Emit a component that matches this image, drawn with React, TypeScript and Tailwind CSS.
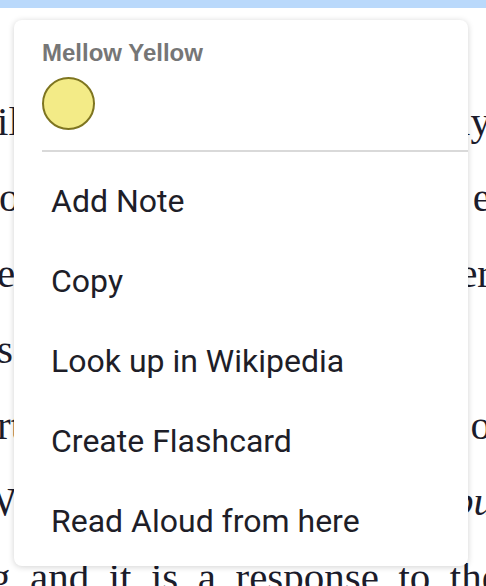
import React from "react";

const menuItems = [
  "Add Note",
  "Copy",
  "Look up in Wikipedia",
  "Create Flashcard",
  "Read Aloud from here",
];

// edges of the book text that peek out around the popup
const pageLines: { left: string; right: string; leftClass?: string; italicRight?: boolean }[] = [
  { left: "il", right: "ly" },
  { left: "o", right: "e", leftClass: "-ml-[1px]" },
  { left: "e", right: "er" },
  { left: "s", right: "" },
  { left: "rt", right: "o" },
  { left: "W", right: "pu", leftClass: "-ml-[22px]", italicRight: true },
];

const lastLine = ["g", "and", "it", "is", "a", "response", "to", "the"];

const App: React.FC = () => {
  return (
    <div className="relative w-[486px] h-[586px] overflow-hidden bg-white">
      <div className="h-[8px] bg-[#bad9fb]" />

      <div className="font-['Liberation_Serif',serif] text-[41px] text-[#1c1c2b] pt-[75px]">
        {pageLines.map((line, i) => (
          <div key={i} className="flex justify-between h-[76px] leading-[76px]">
            <span className={line.leftClass ?? "-ml-[3px]"}>{line.left}</span>
            <span className={line.italicRight ? "italic -mr-[8px]" : "-mr-[5px]"}>
              {line.right}
            </span>
          </div>
        ))}
        <div className="flex justify-between h-[76px] leading-[76px] -ml-[10px] -mr-[14px]">
          {lastLine.map((w, i) => (
            <span key={i}>{w}</span>
          ))}
        </div>
      </div>

      {/* selection popup */}
      <div className="absolute left-[14px] top-[20px] w-[454px] h-[546px] bg-white rounded-[8px] shadow-[0_1px_6px_rgba(0,0,0,0.18)] flex flex-col">
        <div className="pt-[19px] pl-[28px]">
          <div className="font-['Liberation_Sans',Arial,sans-serif] font-bold text-[24px] leading-[28px] text-[#767676]">
            Mellow Yellow
          </div>
          <div className="mt-[10px] w-[53px] h-[53px] rounded-full bg-[#f3eb87] border-2 border-[#7e7520]" />
        </div>
        <div className="mt-[20px] ml-[28px] h-[2px] bg-[#d9d9d9]" />
        <div className="pt-[9px] flex flex-col">
          {menuItems.map((item) => (
            <button
              key={item}
              className="h-[80px] pl-[37px] text-left font-['Roboto',sans-serif] text-[32px] text-[#1e1e28]"
            >
              {item}
            </button>
          ))}
        </div>
      </div>
    </div>
  );
};

export default App;
